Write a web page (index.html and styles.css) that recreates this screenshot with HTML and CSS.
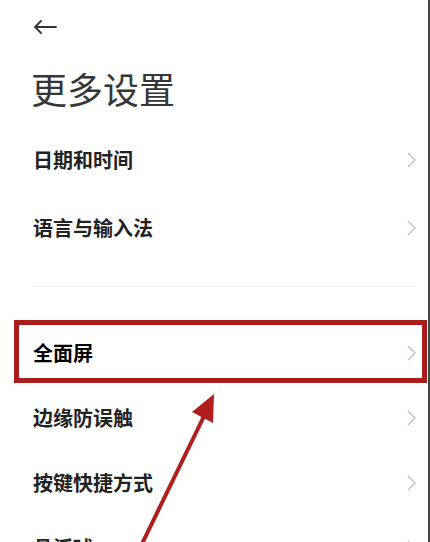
FILE: index.html
```html
<!DOCTYPE html>
<html lang="zh-CN">
<head>
    <meta charset="UTF-8">
    <meta name="viewport" content="width=device-width, initial-scale=1.0">
    <title>更多设置</title>
    <link rel="stylesheet" href="styles.css">
</head>
<body>
    <div class="page">
        <header class="top-bar">
            <svg class="back-icon" width="24" height="14" viewBox="0 0 24 14">
                <path d="M23 7 H2 M8 1 L2 7 L8 13" fill="none" stroke="#333" stroke-width="1.8" stroke-linecap="round" stroke-linejoin="round"/>
            </svg>
        </header>

        <h1 class="page-title">更多设置</h1>

        <div class="group">
            <div class="row tall">
                <span class="label">日期和时间</span>
                <svg class="chevron" width="9" height="16" viewBox="0 0 9 16"><polyline points="1,1 8,8 1,15" fill="none" stroke="#bdbdbd" stroke-width="1.3"/></svg>
            </div>
            <div class="row tall">
                <span class="label">语言与输入法</span>
                <svg class="chevron" width="9" height="16" viewBox="0 0 9 16"><polyline points="1,1 8,8 1,15" fill="none" stroke="#bdbdbd" stroke-width="1.3"/></svg>
            </div>
        </div>

        <div class="divider"></div>

        <div class="group">
            <div class="row highlighted">
                <span class="label strong">全面屏</span>
                <svg class="chevron" width="9" height="16" viewBox="0 0 9 16"><polyline points="1,1 8,8 1,15" fill="none" stroke="#bdbdbd" stroke-width="1.3"/></svg>
                <span class="mark-box"></span>
            </div>
            <div class="row">
                <span class="label">边缘防误触</span>
                <svg class="chevron" width="9" height="16" viewBox="0 0 9 16"><polyline points="1,1 8,8 1,15" fill="none" stroke="#bdbdbd" stroke-width="1.3"/></svg>
            </div>
            <div class="row">
                <span class="label">按键快捷方式</span>
                <svg class="chevron" width="9" height="16" viewBox="0 0 9 16"><polyline points="1,1 8,8 1,15" fill="none" stroke="#bdbdbd" stroke-width="1.3"/></svg>
            </div>
            <div class="row">
                <span class="label">悬浮球</span>
                <svg class="chevron" width="9" height="16" viewBox="0 0 9 16"><polyline points="1,1 8,8 1,15" fill="none" stroke="#bdbdbd" stroke-width="1.3"/></svg>
            </div>
        </div>

        <!-- annotation arrow pointing at the highlighted row -->
        <svg class="pointer" width="430" height="542" viewBox="0 0 430 542">
            <line x1="139" y1="550" x2="207" y2="410" stroke="#b01e1e" stroke-width="4"/>
            <polygon points="214,394 192,412 213,423" fill="#b01e1e"/>
        </svg>
    </div>
</body>
</html>
```

FILE: styles.css
```css
/* Page reset */
* {
    margin: 0;
    padding: 0;
    box-sizing: border-box;
}

body {
    font-family: 'Noto Sans CJK SC', 'Noto Sans', sans-serif;
    background: #fff;
    color: #1c1c1c;
    overflow: hidden;
}

.page {
    position: relative;
    width: 430px;
    height: 542px;
    overflow: hidden;
    border-right: 2px solid #444;
    background: #fff;
}

.top-bar {
    height: 54px;
    padding-left: 33px;
    display: flex;
    align-items: center;
}

.back-icon {
    display: block;
}

.page-title {
    margin-top: 16px;
    padding-left: 31px;
    font-size: 36px;
    line-height: 36px;
    font-weight: 400;
    color: #363636;
    letter-spacing: 0;
}

.group {
    display: flex;
    flex-direction: column;
}

.group:first-of-type {
    margin-top: 20px;
}

.row {
    position: relative;
    height: 65px;
    padding: 0 12px 0 33px;
    display: flex;
    align-items: center;
    justify-content: space-between;
}

.row.tall {
    height: 68px;
}

.label {
    font-size: 20px;
    line-height: 24px;
    font-weight: 700;
    color: #222;
}

.label.strong {
    color: #000;
}

.chevron {
    display: block;
}

.divider {
    height: 1px;
    margin: 24px 13px 33px 33px;
    background: #efefef;
}

/* red annotation frame */
.mark-box {
    position: absolute;
    top: 0;
    left: 14px;
    right: 1px;
    bottom: 2px;
    border: 5px solid #ab1d1d;
}

.pointer {
    position: absolute;
    top: 0;
    left: 0;
    pointer-events: none;
}
```
